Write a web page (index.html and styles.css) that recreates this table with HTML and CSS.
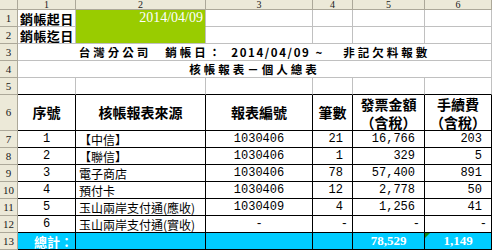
FILE: index.html
```html
<!DOCTYPE html>
<html>
<head>
<meta charset="utf-8">
<link rel="stylesheet" href="styles.css">
</head>
<body>
<div class="sheet">
  <div class="corner"></div>
  <div class="ch">1</div><div class="ch">2</div><div class="ch">3</div><div class="ch">4</div><div class="ch">5</div><div class="ch">6</div>

  <div class="rh">1</div>
  <div class="c label">銷帳起日</div>
  <div class="c green g1 date">2014/04/09</div>
  <div class="c"></div><div class="c"></div><div class="c"></div><div class="c"></div>

  <div class="rh">2</div>
  <div class="c label">銷帳迄日</div>
  <div class="c green"></div>
  <div class="c"></div><div class="c"></div><div class="c"></div><div class="c"></div>

  <div class="rh">3</div>
  <div class="c title span6"><span class="t-co">台灣分公司</span><span class="t-lbl">銷帳日：</span><span class="t-date">2014/04/09</span><span class="t-tilde">~</span><span>非記欠料報數</span></div>

  <div class="rh">4</div>
  <div class="c title span6">核帳報表－個人總表</div>

  <div class="rh">5</div>
  <div class="c top"></div><div class="c top"></div><div class="c top"></div><div class="c top"></div><div class="c top"></div><div class="c top"></div>

  <div class="rh">6</div>
  <div class="c tb th">序號</div>
  <div class="c tb th">核帳報表來源</div>
  <div class="c tb th">報表編號</div>
  <div class="c tb th">筆數</div>
  <div class="c tb th two"><span>發票金額</span><span>（含稅）</span></div>
  <div class="c tb th two"><span>手續費</span><span>（含稅）</span></div>

  <div class="rh">7</div>
  <div class="c tb num ctr">1</div><div class="c tb txt">【中信】</div><div class="c tb num ctr">1030406</div><div class="c tb num r">21</div><div class="c tb num r">16,766</div><div class="c tb num r">203</div>

  <div class="rh">8</div>
  <div class="c tb num ctr">2</div><div class="c tb txt">【聯信】</div><div class="c tb num ctr">1030406</div><div class="c tb num r">1</div><div class="c tb num r">329</div><div class="c tb num r">5</div>

  <div class="rh">9</div>
  <div class="c tb num ctr">3</div><div class="c tb txt">電子商店</div><div class="c tb num ctr">1030406</div><div class="c tb num r">78</div><div class="c tb num r">57,400</div><div class="c tb num r">891</div>

  <div class="rh">10</div>
  <div class="c tb num ctr">4</div><div class="c tb txt">預付卡</div><div class="c tb num ctr">1030406</div><div class="c tb num r">12</div><div class="c tb num r">2,778</div><div class="c tb num r">50</div>

  <div class="rh">11</div>
  <div class="c tb num ctr">5</div><div class="c tb txt">玉山兩岸支付通(應收)</div><div class="c tb num ctr">1030409</div><div class="c tb num r">4</div><div class="c tb num r">1,256</div><div class="c tb num r">41</div>

  <div class="rh">12</div>
  <div class="c tb num ctr">6</div><div class="c tb txt">玉山兩岸支付通(實收)</div><div class="c tb num ctr">-</div><div class="c tb num dash">-</div><div class="c tb num dash">-</div><div class="c tb num dash">-</div>

  <div class="rh">13</div>
  <div class="c tb cyan total-label">總計：</div>
  <div class="c tb cyan"></div>
  <div class="c tb cyan"></div>
  <div class="c tb cyan"></div>
  <div class="c tb cyan total">78,529</div>
  <div class="c tb cyan total flag">1,149</div>
</div>
</body>
</html>
```

FILE: styles.css
```css
html, body {
  margin: 0;
  padding: 0;
  background: #ffffff;
}

body {
  width: 492px;
  height: 250px;
  overflow: hidden;
}

.sheet {
  display: grid;
  grid-template-columns: 18px 58px 130px 107px 40px 72px 67px;
  grid-template-rows: 10px repeat(5, 17px) 36px repeat(7, 17px);
  font-family: "Liberation Serif", "Noto Sans CJK TC", serif;
  color: #000;
}

.sheet > div {
  box-sizing: border-box;
  display: flex;
  align-items: center;
  white-space: nowrap;
  overflow: hidden;
  min-width: 0;
}

.corner,
.ch,
.rh {
  background: #ece9d8;
  border-right: 1px solid #aca899;
  border-bottom: 1px solid #aca899;
  color: #1a1a1a;
}

.ch {
  justify-content: center;
  font-size: 10px;
  line-height: 10px;
}

.rh {
  justify-content: center;
  align-items: flex-end;
  font-size: 11px;
  line-height: 12px;
  padding-bottom: 1px;
}

.c {
  border-right: 1px solid #c0c0c0;
  border-bottom: 1px solid #c0c0c0;
}

.label {
  font-family: "Noto Sans CJK TC", sans-serif;
  font-weight: 700;
  font-size: 13px;
  letter-spacing: 0.4px;
  line-height: 15px;
  padding-left: 2px;
}

.green {
  background: #99cc00;
}

.g1 {
  border-bottom-color: #99cc00;
}

.date {
  justify-content: flex-end;
  color: #ffffff;
  font-family: "Liberation Serif", serif;
  font-size: 14px;
  padding-right: 2px;
}

.span6 {
  grid-column: span 6;
}

.title {
  justify-content: center;
  font-family: "Noto Sans CJK TC", sans-serif;
  font-weight: 700;
  font-size: 11.5px;
  line-height: 15px;
  letter-spacing: 3px;
}

.t-co {
  margin-right: 14px;
}

.t-lbl {
  margin-right: 8px;
}

.t-date {
  letter-spacing: 1.6px;
  margin-right: 5px;
}

.t-tilde {
  letter-spacing: 0;
  margin-right: 21px;
}

.top {
  border-bottom-color: #000;
}

.tb {
  border-right-color: #000;
  border-bottom-color: #000;
}

.th {
  flex-direction: column;
  justify-content: center;
  font-family: "Noto Sans CJK TC", sans-serif;
  font-weight: 700;
  font-size: 14px;
  line-height: 17px;
}

.two {
  line-height: 16px;
  gap: 2px;
}

.num {
  font-family: "Liberation Mono", monospace;
  font-size: 12px;
}

.ctr {
  justify-content: center;
}

.r {
  justify-content: flex-end;
  padding-right: 9px;
}

.dash {
  justify-content: flex-end;
  padding-right: 4px;
}

.txt {
  font-family: "Noto Sans CJK TC", sans-serif;
  font-size: 12px;
  padding-left: 3px;
}

.cyan {
  background: #00ccff;
  color: #ffffff;
}

.total-label {
  justify-content: flex-end;
  font-family: "Noto Sans CJK TC", sans-serif;
  font-weight: 700;
  font-size: 13px;
  padding-right: 2px;
}

.total {
  justify-content: center;
  font-family: "Liberation Serif", serif;
  font-weight: 700;
  font-size: 13px;
}

.flag {
  position: relative;
}

.flag::before {
  content: "";
  position: absolute;
  top: 0;
  left: 0;
  border-top: 5px solid #138a13;
  border-right: 5px solid transparent;
}
```
